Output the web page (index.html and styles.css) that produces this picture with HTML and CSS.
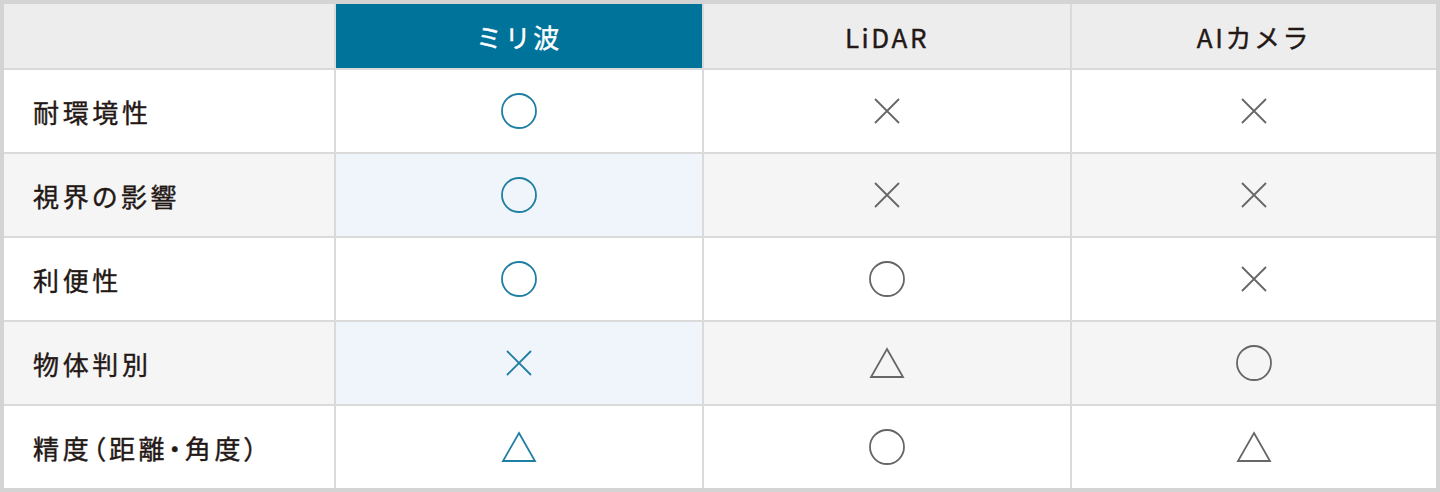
FILE: index.html
```html
<!DOCTYPE html>
<html lang="ja">
<head>
<meta charset="utf-8">
<title>比較表</title>
<link rel="stylesheet" href="styles.css">
</head>
<body>
<div class="table">
  <div class="cell head"></div>
  <div class="cell head hl">ミリ波</div>
  <div class="cell head">LiDAR</div>
  <div class="cell head">AIカメラ</div>

  <div class="cell label">耐環境性</div>
  <div class="cell mark teal"><svg viewBox="0 0 38 38" width="38" height="38"><circle cx="19" cy="19" r="17"/></svg></div>
  <div class="cell mark"><svg viewBox="0 0 26 26" width="26" height="26"><path d="M1 1L25 25M25 1L1 25"/></svg></div>
  <div class="cell mark"><svg viewBox="0 0 26 26" width="26" height="26"><path d="M1 1L25 25M25 1L1 25"/></svg></div>

  <div class="cell label alt">視界の影響</div>
  <div class="cell mark teal altb"><svg viewBox="0 0 38 38" width="38" height="38"><circle cx="19" cy="19" r="17"/></svg></div>
  <div class="cell mark alt"><svg viewBox="0 0 26 26" width="26" height="26"><path d="M1 1L25 25M25 1L1 25"/></svg></div>
  <div class="cell mark alt"><svg viewBox="0 0 26 26" width="26" height="26"><path d="M1 1L25 25M25 1L1 25"/></svg></div>

  <div class="cell label">利便性</div>
  <div class="cell mark teal"><svg viewBox="0 0 38 38" width="38" height="38"><circle cx="19" cy="19" r="17"/></svg></div>
  <div class="cell mark"><svg viewBox="0 0 38 38" width="38" height="38"><circle cx="19" cy="19" r="17"/></svg></div>
  <div class="cell mark"><svg viewBox="0 0 26 26" width="26" height="26"><path d="M1 1L25 25M25 1L1 25"/></svg></div>

  <div class="cell label alt">物体判別</div>
  <div class="cell mark teal altb"><svg viewBox="0 0 26 26" width="26" height="26"><path d="M1 1L25 25M25 1L1 25"/></svg></div>
  <div class="cell mark alt"><svg viewBox="0 0 36 32" width="36" height="32"><path d="M18 2L34 30H2Z"/></svg></div>
  <div class="cell mark alt"><svg viewBox="0 0 38 38" width="38" height="38"><circle cx="19" cy="19" r="17"/></svg></div>

  <div class="cell label">精度（距離・角度）</div>
  <div class="cell mark teal"><svg viewBox="0 0 36 32" width="36" height="32"><path d="M18 2L34 30H2Z"/></svg></div>
  <div class="cell mark"><svg viewBox="0 0 38 38" width="38" height="38"><circle cx="19" cy="19" r="17"/></svg></div>
  <div class="cell mark"><svg viewBox="0 0 36 32" width="36" height="32"><path d="M18 2L34 30H2Z"/></svg></div>
</div>
</body>
</html>
```
FILE: styles.css
```css
html, body {
  margin: 0;
  padding: 0;
  background: #ffffff;
}
body {
  font-family: "Noto Sans CJK JP", "Noto Sans", sans-serif;
  color: #231815;
}
.table {
  display: grid;
  grid-template-columns: 330px 366px 366px 364px;
  grid-template-rows: 64px repeat(5, 82px);
  gap: 2px;
  background: #dadada;
  border: 4px solid #d4d4d4;
  width: 1432px;
}
.cell {
  background: #ffffff;
  display: flex;
  align-items: center;
  justify-content: center;
}
.head {
  background: #ededed;
  font-size: 26px;
  font-weight: 400;
  letter-spacing: 0.1em;
  -webkit-text-stroke: 0.4px currentColor;
}
.head.hl {
  background: #00739a;
  color: #ffffff;
}
.label {
  justify-content: flex-start;
  padding-left: 29px;
  font-size: 26px;
  font-weight: 400;
  letter-spacing: 0.14em;
  font-feature-settings: "palt";
  -webkit-text-stroke: 0.4px currentColor;
}
.alt {
  background: #f5f5f5;
}
.altb {
  background: #eff5fa;
}
.mark svg {
  display: block;
  fill: none;
  stroke: #666666;
  stroke-width: 1.8;
}
.mark.teal svg {
  stroke: #1f7fa2;
}
```
